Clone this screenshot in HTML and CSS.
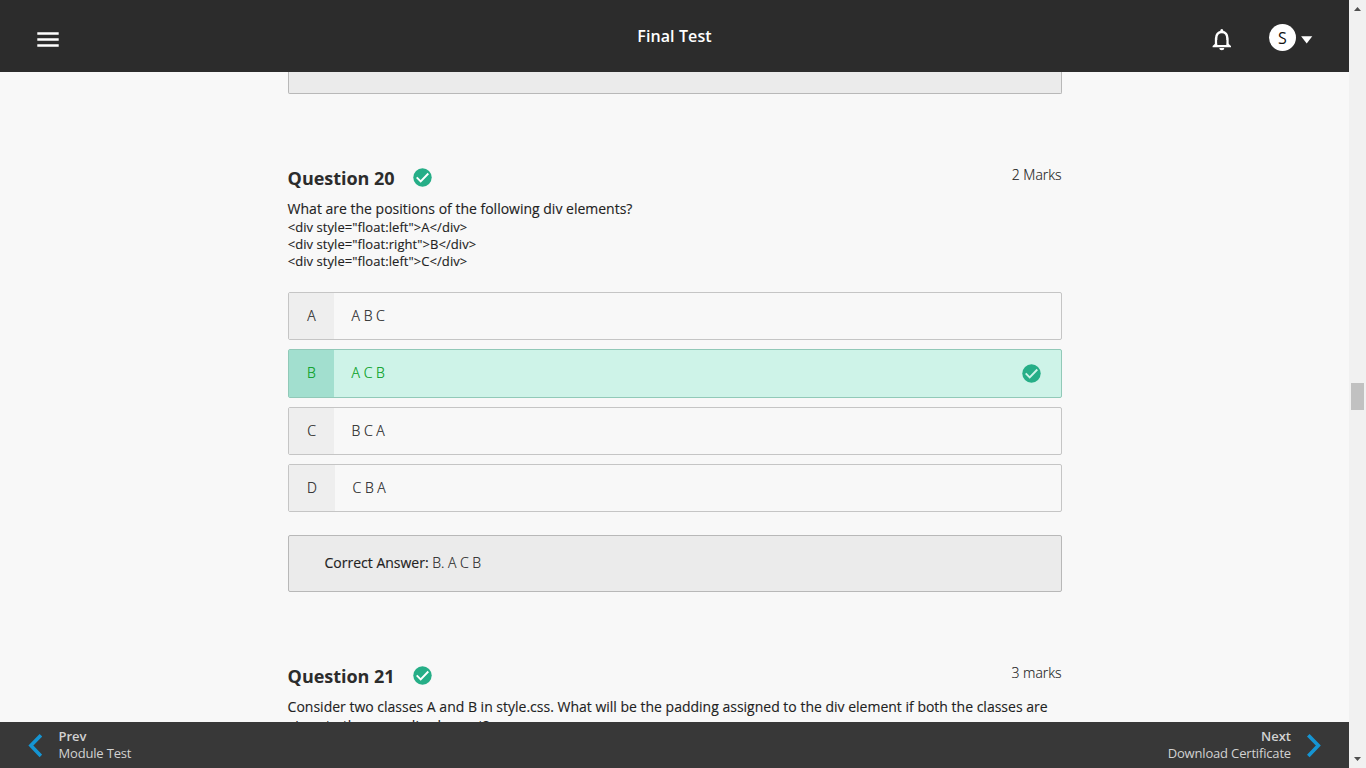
FILE: index.html
```html
<!DOCTYPE html>
<html lang="en">
<head>
<meta charset="utf-8">
<title>Final Test</title>
<link rel="stylesheet" href="styles.css">
</head>
<body>
<svg class="defs" width="0" height="0" aria-hidden="true">
  <symbol id="check" viewBox="0 0 19 19"><circle cx="9.5" cy="9.5" r="9.2" fill="#26ae87"/><path d="M3.7 9.3l4 4 7.6-7.8" fill="none" stroke="currentColor" stroke-width="1.9"/></symbol>
</svg>
<div class="app">
  <div class="page">
    <header class="topbar">
      <svg class="menu" width="22" height="15" viewBox="0 0 22 15"><path d="M.3 1.5h21.4M.3 7.5h21.4M.3 13.5h21.4" stroke="#fff" stroke-width="2.5"/></svg>
      <h1 class="title">Final Test</h1>
      <div class="account">
        <svg class="bell" width="20" height="23" viewBox="0 0 20 23"><path d="M4.1 18V10.4C4.1 6.6 6.2 3.9 9.8 3.9s5.6 2.7 5.6 6.5V18" fill="none" stroke="#fff" stroke-width="2.5"/><path d="M8.3 4V2.5a1.5 1.5 0 0 1 3 0V4zM.6 19.2v-1.3l2.8-2.4h12.8l2.8 2.4v1.3z" fill="#fff"/><path d="M5.3 12h9v5H5.3z" fill="#2c2c2c"/><path d="M7.3 20h5a2.5 2.3 0 0 1-5 0z" fill="#fff"/></svg>
        <span class="avatar">S</span>
        <svg class="caret" width="12" height="8" viewBox="0 0 12 8"><path d="M.1.2h11.2L5.7 7.5z" fill="#fff"/></svg>
      </div>
    </header>
    <main class="content">
      <div class="answer previous"></div>
      <section class="question">
        <div class="head"><h2>Question 20</h2><svg class="check"><use href="#check"/></svg><span class="marks">2 Marks</span></div>
        <p class="prompt">What are the positions of the following div elements?</p>
        <div class="code"><div>&lt;div style="float:left"&gt;A&lt;/div&gt;</div><div>&lt;div style="float:right"&gt;B&lt;/div&gt;</div><div>&lt;div style="float:left"&gt;C&lt;/div&gt;</div></div>
        <div class="options">
          <div class="option"><span class="letter">A</span><span class="value">A B C</span></div>
          <div class="option correct"><span class="letter">B</span><span class="value">A C B</span><svg class="check"><use href="#check"/></svg></div>
          <div class="option"><span class="letter">C</span><span class="value">B C A</span></div>
          <div class="option wide"><span class="letter">D</span><span class="value">C B A</span></div>
        </div>
        <div class="answer"><b>Correct Answer:</b>&nbsp;B. A C B</div>
      </section>
      <section class="question next-question">
        <div class="head"><h2>Question 21</h2><svg class="check"><use href="#check"/></svg><span class="marks">3 marks</span></div>
        <p class="prompt">Consider two classes A and B in style.css. What will be the padding assigned to the div element if both the classes are given to the same div element?</p>
      </section>
    </main>
    <footer class="pager">
      <a class="link"><svg width="14" height="24" viewBox="0 0 14 24"><path d="M12.9 1.3L2.9 11.6l10 10.3" fill="none" stroke="#1595d3" stroke-width="3.6"/></svg><span><b>Prev</b><br>Module Test</span></a>
      <a class="link forward"><span><b>Next</b><br>Download Certificate</span><svg width="14" height="24" viewBox="0 0 14 24"><path d="M1.3 1.3l10 10.3-10 10.3" fill="none" stroke="#1595d3" stroke-width="3.6"/></svg></a>
    </footer>
  </div>
  <div class="scrollbar">
    <svg width="7" height="4" viewBox="0 0 7 4"><path d="M0 4L3.5 0 7 4z" fill="#505050"/></svg>
    <div class="thumb"></div>
    <svg class="down" width="7" height="4" viewBox="0 0 7 4"><path d="M0 0l3.5 4L7 0z" fill="#505050"/></svg>
  </div>
</div>
</body>
</html>
```
FILE: styles.css
```css
* { box-sizing: border-box; }
body { margin: 0; overflow: hidden; background: #f8f8f8; color: #222; font: 14px/19px "Open Sans", sans-serif; }
h1, h2, p { margin: 0; }
svg { display: block; flex: none; }
.defs { position: absolute; }
.app { display: flex; width: 1366px; height: 768px; }
.page { display: flex; flex-direction: column; width: 1349px; height: 768px; }
.topbar { display: grid; grid-template-columns: 1fr auto 1fr; flex: none; height: 72px; background: #2c2c2c; color: #fff; }
.menu { margin: 32px 0 0 37px; }
.title { margin-top: 25px; font-size: 16px; line-height: 22px; font-weight: 600; letter-spacing: .1px; }
.account { display: flex; justify-content: flex-end; padding: 24px 36px 0 0; }
.bell { margin: 4px 37.4px 0 0; }
.avatar { width: 27px; height: 27px; border-radius: 50%; background: #fff; color: #111; font-size: 16px; line-height: 29px; text-align: center; }
.caret { margin: 12px 0 0 5px; }
.content { flex: 1; min-height: 0; overflow: hidden; padding: 0 287px 0 288px; }
.answer { height: 57px; margin-top: 23px; padding: 17px 36px 18px 35.5px; border: 1px solid #b8b8b8; border-radius: 2px; background: #ebebeb; color: #222; font-weight: 300; -webkit-text-stroke: .15px; }
.answer b { font-weight: 400; }
.answer.previous { height: 22px; margin: 0 0 72px; padding: 0; border-top: 0; border-radius: 0 0 2px 2px; }
.head { display: flex; height: 33px; }
.head h2 { width: 125.5px; margin-left: -.4px; color: #2c2c2c; font-size: 18px; line-height: 25px; font-weight: 700; letter-spacing: -.04px; }
.head .check { margin-top: 2.4px; color: #fff; }
.check { width: 19px; height: 19px; }
.marks { margin: -1px .4px 0 auto; color: #222; font-weight: 300; -webkit-text-stroke: .15px; }
.prompt { margin-left: -.4px; -webkit-text-stroke: .12px; }
.code { margin: 0 0 22px -.3px; padding-top: 1px; font-size: 13px; line-height: 17px; letter-spacing: .065px; -webkit-text-stroke: .12px; }
.option { display: flex; align-items: stretch; height: 48px; margin-bottom: 9px; border: 1px solid #c5c5c5; border-radius: 2px; color: #222; font-weight: 300; line-height: 46px; -webkit-text-stroke: .2px; }
.option.correct { height: 49px; border-color: #91c9b8; background: #cef3e8; color: #009c18; }
.letter { width: 45px; background: #eee; text-align: center; }
.wide .letter { width: 46px; }
.correct .letter { background: #a2dfcf; }
.value { flex: 1; padding-left: 17.6px; }
.option:last-child { margin-bottom: 0; }
.option .check { margin: 13.6px 20px 0 0; color: #cef3e8; }
.next-question { margin-top: 72px; }
.pager { display: flex; justify-content: space-between; flex: none; height: 46px; padding: 6px 28.5px 0 28px; background: #383838; color: #d2d2d2; font-size: 13px; line-height: 17px; letter-spacing: -.17px; }
.pager b { font-weight: 600; letter-spacing: 0; }
.link { display: flex; gap: 16.5px; }
.link svg { margin-top: 5.5px; }
.forward { gap: 15.5px; text-align: right; }
.scrollbar { display: flex; flex-direction: column; align-items: center; width: 17px; padding: 7px 0 7px; background: #f1f1f1; }
.thumb { width: 13px; height: 27px; margin-top: 372px; background: #c1c1c1; }
.down { margin-top: auto; }
```
